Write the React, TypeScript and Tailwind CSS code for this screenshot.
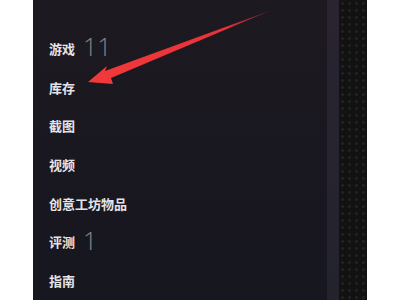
import React from "react";

const items: { label: string; count?: string }[] = [
  { label: "游戏", count: "11" },
  { label: "库存" },
  { label: "截图" },
  { label: "视频" },
  { label: "创意工坊物品" },
  { label: "评测", count: "1" },
  { label: "指南" },
];

export default function App() {
  return (
    <div className="relative flex h-[300px] w-[400px] overflow-hidden bg-white" style={{ fontFamily: '"Noto Sans CJK SC", "Noto Sans", sans-serif' }}>
      <div className="w-[33px] shrink-0 bg-white" />
      <div className="flex w-[294px] shrink-0 flex-col bg-gradient-to-b from-[#1d1921] via-[#19171f] to-[#17171f] pl-[16px] pt-[29px]">
        {items.map((it) => (
          <div key={it.label} className="flex h-[39px] items-center gap-[8px]">
            <span className="text-[13px] font-bold leading-none text-[#e4e4e8]">{it.label}</span>
            {it.count && (
              <span className="-mt-[3px] text-[25px] font-light leading-none text-[#85858d]" style={{ fontFamily: '"Open Sans", "Liberation Sans", sans-serif' }}>
                {it.count}
              </span>
            )}
          </div>
        ))}
      </div>
      <div className="w-[12px] shrink-0 bg-gradient-to-b from-[#2a2331] to-[#24232d]" />
      <div
        className="w-[28px] shrink-0 bg-[#121212]"
        style={{
          backgroundImage: "radial-gradient(circle, #222222 1.2px, transparent 1.6px)",
          backgroundSize: "7px 7px",
        }}
      />
      <div className="flex-1 bg-white" />
      <svg className="absolute left-0 top-0" width="400" height="300" viewBox="0 0 400 300">
        <defs>
          <linearGradient id="g" x1="88" y1="82" x2="272" y2="10" gradientUnits="userSpaceOnUse">
            <stop offset="0" stopColor="#f23a3a" />
            <stop offset="0.75" stopColor="#e8323a" />
            <stop offset="1" stopColor="#8a2a3a" stopOpacity="0.6" />
          </linearGradient>
        </defs>
        <polygon points="88,82 107,66 105,71 272,10 111,78 113,84" fill="url(#g)" />
      </svg>
    </div>
  );
}
